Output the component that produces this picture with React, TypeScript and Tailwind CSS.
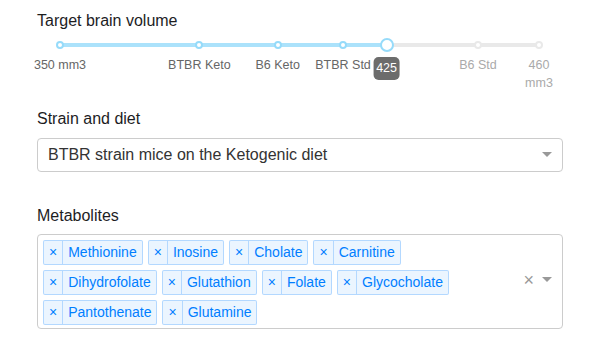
import React from 'react';

const MIN = 350;
const MAX = 460;
const VALUE = 425;

const marks = [
  { value: 350, label: '350 mm3' },
  { value: 382, label: 'BTBR Keto' },
  { value: 400, label: 'B6 Keto' },
  { value: 415, label: 'BTBR Std' },
  { value: 446, label: 'B6 Std' },
  { value: 460, label: '460 mm3' },
];

const metabolites = [
  'Methionine',
  'Inosine',
  'Cholate',
  'Carnitine',
  'Dihydrofolate',
  'Glutathion',
  'Folate',
  'Glycocholate',
  'Pantothenate',
  'Glutamine',
];

const pct = (v: number) => ((v - MIN) / (MAX - MIN)) * 100;

function Label({ children }: { children: React.ReactNode }) {
  return <div className="text-[16px] leading-[24px] text-[#1d1d1f]">{children}</div>;
}

function Arrow() {
  return (
    <span className="block h-0 w-0 border-x-[5px] border-t-[5px] border-b-[2.5px] border-x-transparent border-b-transparent border-t-[#999]" />
  );
}

function VolumeSlider() {
  return (
    <div className="relative ml-[23px] mr-[24px] h-[56px]">
      <div className="absolute left-0 right-0 top-[10px] h-[4px] rounded-full bg-[#e9e9e9]" />
      <div
        className="absolute left-0 top-[10px] h-[4px] rounded-full bg-[#abe2fb]"
        style={{ width: `${pct(VALUE)}%` }}
      />
      {marks.map((m) => {
        const active = m.value <= VALUE;
        return (
          <React.Fragment key={m.value}>
            <span
              className={`absolute top-[8px] -ml-[4px] h-[8px] w-[8px] rounded-full border-2 bg-white ${
                active ? 'border-[#96dbfa]' : 'border-[#e9e9e9]'
              }`}
              style={{ left: `${pct(m.value)}%` }}
            />
            <span
              className={`absolute top-[23px] -translate-x-1/2 text-center text-[12.5px] leading-[18px] ${
                m.value === MAX ? 'w-[34px]' : 'whitespace-nowrap'
              } ${active ? 'text-[#666]' : 'text-[#aaa]'}`}
              style={{ left: `${pct(m.value)}%` }}
            >
              {m.label}
            </span>
          </React.Fragment>
        );
      })}
      <span
        className="absolute top-[5px] -ml-[7px] h-[14px] w-[14px] rounded-full border-2 border-[#96dbfa] bg-white"
        style={{ left: `${pct(VALUE)}%` }}
      />
      <span
        className="absolute top-[24px] flex h-[23px] min-w-[26px] -translate-x-1/2 items-center justify-center rounded-[5px] bg-[#6c6c6c] px-[3px] text-[12.5px] text-white"
        style={{ left: `${pct(VALUE)}%` }}
      >
        {VALUE}
      </span>
    </div>
  );
}

function Tag({ label }: { label: string }) {
  return (
    <div className="ml-[5px] mt-[5px] flex h-[25px] items-stretch rounded-[2px] border border-[rgba(0,126,255,0.24)] bg-[rgba(0,126,255,0.08)] text-[14px] text-[#007eff]">
      <span className="flex items-center border-r border-[rgba(0,126,255,0.24)] px-[5px] pb-[1px]">×</span>
      <span className="flex items-center px-[5px]">{label}</span>
    </div>
  );
}

export default function App() {
  return (
    <div className="flex min-h-[338px] w-[600px] flex-col bg-white px-[37px] pt-[9px] font-['Liberation_Sans',Arial,sans-serif]">
      <Label>Target brain volume</Label>
      <VolumeSlider />

      <div className="mt-[18px]">
        <Label>Strain and diet</Label>
      </div>
      <div className="mt-[7px] flex h-[34px] items-center rounded-[4px] border border-[#ccc] bg-white pl-[10px] pr-[10px]">
        <span className="flex-1 text-[16px] text-[#333]">BTBR strain mice on the Ketogenic diet</span>
        <Arrow />
      </div>

      <div className="mt-[32px]">
        <Label>Metabolites</Label>
      </div>
      <div className="mt-[6px] flex items-center rounded-[4px] border border-[#ccc] bg-white pb-[3px]">
        <div className="flex w-[476px] flex-wrap">
          {metabolites.map((m) => (
            <Tag key={m} label={m} />
          ))}
        </div>
        <div className="ml-auto flex items-center pr-[10px]">
          <span className="mr-[8px] text-[18px] leading-none text-[#999]">×</span>
          <Arrow />
        </div>
      </div>
    </div>
  );
}
